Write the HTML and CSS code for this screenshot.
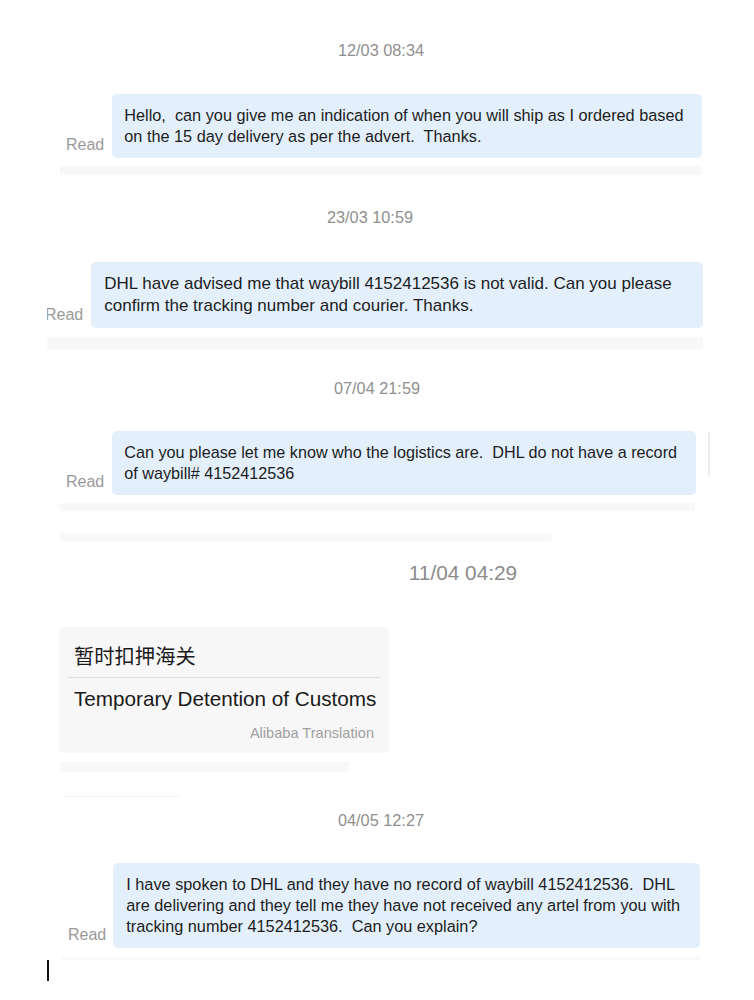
FILE: index.html
```html
<!DOCTYPE html>
<html lang="en">
<head>
<meta charset="utf-8">
<title>Chat</title>
<link rel="stylesheet" href="styles.css">
</head>
<body>
<main class="chat">
  <section class="seg seg1">
    <div class="time">12/03 08:34</div>
    <div class="msg">
      <span class="read">Read</span>
      <div class="bubble">
        <span class="line">Hello,  can you give me an indication of when you will ship as I ordered based</span>
        <span class="line">on the 15 day delivery as per the advert.  Thanks.</span>
      </div>
    </div>
    <div class="band"></div>
  </section>

  <section class="seg seg2">
    <div class="time">23/03 10:59</div>
    <div class="clip">
      <div class="msg">
        <span class="read">Read</span>
        <div class="bubble">
          <span class="line">DHL have advised me that waybill 4152412536 is not valid. Can you please</span>
          <span class="line">confirm the tracking number and courier. Thanks.</span>
        </div>
      </div>
    </div>
    <div class="band"></div>
  </section>

  <section class="seg seg3">
    <div class="time">07/04 21:59</div>
    <div class="msg">
      <span class="read">Read</span>
      <div class="bubble">
        <span class="line">Can you please let me know who the logistics are.  DHL do not have a record</span>
        <span class="line">of waybill# 4152412536</span>
      </div>
      <span class="edge"></span>
    </div>
    <div class="band"></div>
    <div class="band band-short"></div>
  </section>

  <section class="seg seg4">
    <div class="time">11/04 04:29</div>
    <div class="card">
      <div class="card-zh">暂时扣押海关</div>
      <div class="card-sep"></div>
      <div class="card-en">Temporary Detention of Customs</div>
      <div class="card-src">Alibaba Translation</div>
    </div>
    <div class="band"></div>
    <div class="hair"></div>
  </section>

  <section class="seg seg5">
    <div class="time">04/05 12:27</div>
    <div class="msg">
      <span class="read">Read</span>
      <div class="bubble">
        <span class="line">I have spoken to DHL and they have no record of waybill 4152412536.  DHL</span>
        <span class="line">are delivering and they tell me they have not received any artel from you with</span>
        <span class="line">tracking number 4152412536.  Can you explain?</span>
      </div>
    </div>
    <div class="band"></div>
    <div class="cursor"></div>
  </section>
</main>
</body>
</html>
```
FILE: styles.css
```css
* { box-sizing: border-box; }

html, body {
  margin: 0;
  padding: 0;
  background: #ffffff;
}

body {
  font-family: "Liberation Sans", Arial, Helvetica, sans-serif;
  color: #1d1d1d;
  width: 754px;
  height: 1000px;
  overflow: hidden;
}

.chat {
  display: flex;
  flex-direction: column;
}

.seg {
  display: flex;
  flex-direction: column;
}

.time {
  width: 200px;
  text-align: center;
  font-size: 16.3px;
  line-height: 20px;
  color: #8f8f8f;
}

.msg {
  display: flex;
  align-items: flex-end;
}

.read {
  font-size: 16px;
  line-height: 20px;
  color: #9a9a9a;
  margin-right: 8px;
  margin-bottom: 3px;
}

.bubble {
  background: #e3f0fc;
  border-radius: 5px;
  padding: 11px 12px;
  font-size: 16.3px;
  line-height: 21px;
  color: #1d1d1d;
}

.line {
  display: block;
  white-space: pre;
}

.band {
  height: 9px;
  background: #f8f8f8;
  border-radius: 3px;
}

/* segment 1 */
.seg1 { padding-top: 40px; }
.seg1 .time { margin-left: 281px; }
.seg1 .msg { margin-top: 34px; margin-left: 66px; }
.seg1 .bubble { width: 590px; padding-left: 12px; }
.seg1 .band { margin: 8px 0 0 60px; width: 642px; }

/* segment 2 */
.seg2 { padding-top: 32px; }
.seg2 .time { margin-left: 270px; }
.seg2 .clip {
  margin-top: 35px;
  margin-left: 47px;
  overflow: hidden;
}
.seg2 .msg { margin-left: -2px; }
.seg2 .read { margin-right: 8px; }
.seg2 .bubble {
  width: 612px;
  line-height: 22px;
  font-size: 17px;
  padding-left: 13px;
}
.seg2 .band { margin: 9px 0 0 47px; width: 656px; height: 12px; }

/* segment 3 */
.seg3 { padding-top: 29px; }
.seg3 .time { margin-left: 277px; }
.seg3 .msg { margin-top: 33px; margin-left: 66px; }
.seg3 .bubble { width: 584px; font-size: 16.2px; padding-left: 12px; }
.seg3 .edge {
  align-self: flex-start;
  width: 2px;
  height: 45px;
  margin-left: 12px;
  background: #ececec;
  border-radius: 1px;
}
.seg3 .band { margin: 8px 0 0 60px; width: 635px; height: 8px; }
.seg3 .band-short { margin-top: 22px; width: 492px; }

/* segment 4 */
.seg4 { padding-top: 20px; }
.seg4 .time {
  margin-left: 363px;
  font-size: 20.8px;
  line-height: 24px;
  color: #8c8c8c;
}
.card {
  margin: 42px 0 0 59px;
  width: 330px;
  background: #f7f7f7;
  border-radius: 5px;
  padding: 14px 15px 11px 15px;
}
.card-zh {
  font-family: "Noto Sans CJK SC", "Liberation Sans", sans-serif;
  font-size: 20.3px;
  line-height: 28px;
  color: #1a1a1a;
}
.card-sep {
  height: 1px;
  background: #dedede;
  margin: 8px -6px 7px -6px;
}
.card-en {
  font-size: 20.7px;
  line-height: 28px;
  color: #1a1a1a;
  white-space: nowrap;
}
.card-src {
  margin-top: 11px;
  font-size: 14.6px;
  line-height: 18px;
  color: #a0a0a0;
  text-align: right;
}
.seg4 .band { margin: 9px 0 0 60px; width: 289px; height: 10px; }
.seg4 .hair {
  margin: 24px 0 0 65px;
  width: 115px;
  height: 1px;
  background: #f3f3f3;
}

/* segment 5 */
.seg5 { padding-top: 13px; }
.seg5 .time { margin-left: 281px; }
.seg5 .msg { margin-top: 33px; margin-left: 68px; }
.seg5 .read { margin-right: 7px; }
.seg5 .bubble { width: 587px; font-size: 16.3px; padding-left: 13px; }
.seg5 .band { margin: 9px 0 0 62px; width: 638px; height: 3px; }
.cursor {
  margin-left: 47px;
  width: 2px;
  height: 21px;
  background: #111;
}
```
